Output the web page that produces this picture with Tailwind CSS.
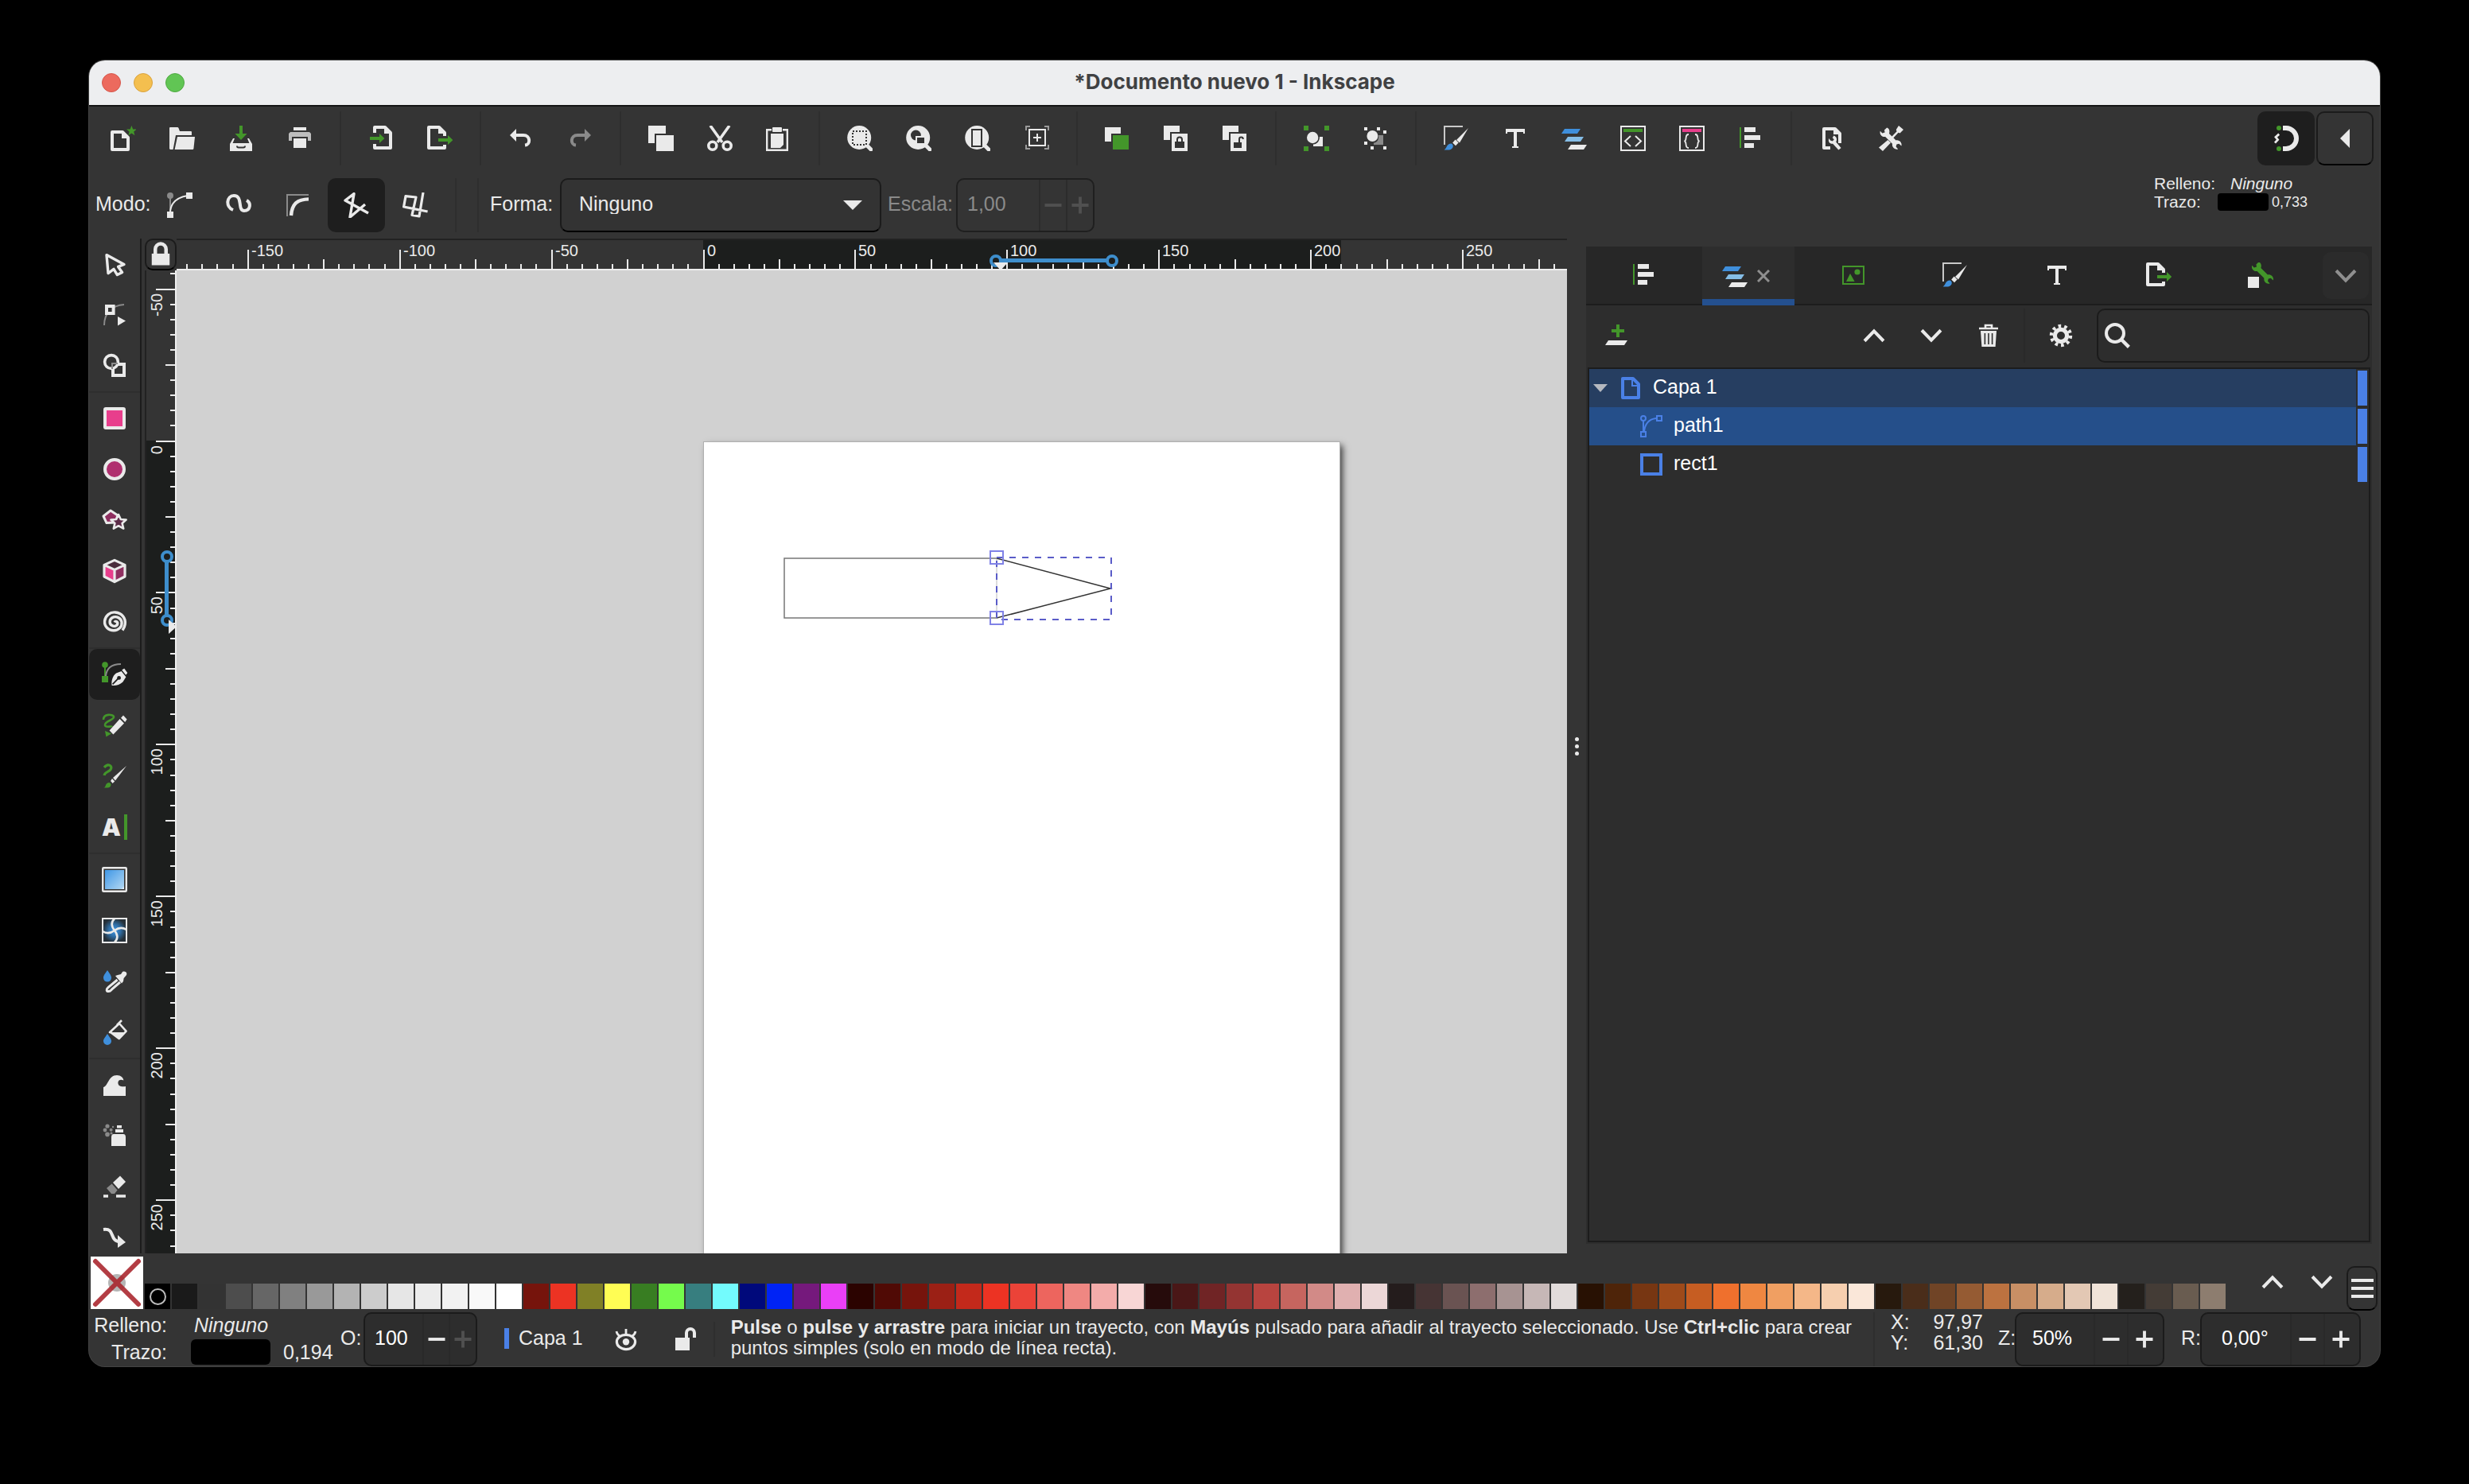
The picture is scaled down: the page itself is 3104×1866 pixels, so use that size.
<!DOCTYPE html>
<html lang="es">
<head>
  <meta charset="UTF-8" />
  <meta name="viewport" content="width=device-width, initial-scale=1.0" />
  <title>*Documento nuevo 1 - Inkscape</title>
  <script src="https://cdn.jsdelivr.net/npm/@tailwindcss/browser@4"></script>
</head>
<body class="bg-black">
  <!-- Icon sprite, 16x16 grid -->
  <svg class="absolute size-0" xmlns="http://www.w3.org/2000/svg">
    <defs>
      <linearGradient id="g-lin" x1="0" y1="0" x2="1" y2="1"><stop offset="0" stop-color="#3f97e6"/><stop offset=".9" stop-color="#a8d2f2"/><stop offset="1" stop-color="#ffffff"/></linearGradient>
      <radialGradient id="g-rad"><stop offset="0" stop-color="#3f97e6"/><stop offset=".5" stop-color="#2f6ea6"/><stop offset="1" stop-color="#263038"/></radialGradient>
      <path id="p-wrench" d="M5.600 1.200 4 2.800 4.300 4.300 2.700 4.800 1.400 3.400C.8 5.400 2.400 7.400 4.600 7L9 11.400c-.4 2.200 1.600 3.900 3.600 3.300l-1.300-1.400.4-1.500 1.500-.4 1.500 1.400c.6-2-1.200-4-3.400-3.600L7 5C7.600 3 6.900 1.600 5.600 1.200z"/>
    </defs>
    <symbol id="i-new" viewBox="0 0 16 16"><path d="M1 4h6.500L11 7.500V15H1z" fill="none" stroke="#eaeaea" stroke-width="2" stroke-linejoin="round"/><path d="M7 4v4h4z" fill="#eaeaea"/><path d="M13.200 0l.9 2.200 2.300.1-1.800 1.500.6 2.300-2-1.300-2 1.300.6-2.300L10 2.300l2.300-.1z" fill="#43962a"/></symbol>
    <symbol id="i-open" viewBox="0 0 16 16"><path d="M0 14.500V1.500Q0 1 .5 1H5q.6 0 .8.600L6.500 3.500H13.500q.5 0 .5.500v2H4L2.300 15H.5z" fill="#eaeaea"/><path d="M5 7h11l-.8 7.500q-.1.500-.6.500H3.300z" fill="#eaeaea"/></symbol>
    <symbol id="i-save" viewBox="0 0 16 16"><path d="M7 0h2v5h2.800L8 9 4.200 5H7z" fill="#43962a"/><path d="M3 8 1 11.500V16h14v-4.500L13 8h-1l1.200 3H2.800L4 8z" fill="#eaeaea"/><path d="M5.500 12.800q0 1 1 1h3q1 0 1-1" fill="none" stroke="#343434"/></symbol>
    <symbol id="i-print" viewBox="0 0 16 16"><rect x="4" y="1" width="8" height="2" fill="#eaeaea"/><path d="M2 4h12l1 1v4.500h-2V7H3v2.500H1V5z" fill="#bdbdbd"/><path d="M3 5h10v2H3z" fill="#bdbdbd"/><rect x="4" y="8" width="8" height="6" fill="#eaeaea"/></symbol>
    <symbol id="i-import" viewBox="0 0 16 16"><path d="M4 4.500V1h6.500L14 4.500V14H4v-2.500" fill="none" stroke="#eaeaea" stroke-width="2" stroke-linejoin="round"/><path d="M10 1v4h4z" fill="#eaeaea"/><path d="M1 7h6V5l3.200 3L7 11V9H1z" fill="#43962a"/></symbol>
    <symbol id="i-export" viewBox="0 0 16 16"><path d="M11 6.500V4.500L7.500 1H1v13h10v-2" fill="none" stroke="#eaeaea" stroke-width="2" stroke-linejoin="round"/><path d="M7 1v4h4.500z" fill="#eaeaea"/><path d="M7 8h6V6l3.200 3L13 12v-2H7z" fill="#43962a"/></symbol>
    <symbol id="i-undo" viewBox="0 0 16 16"><path d="M4 6h5.500c4.600 0 4.600 6 1 6.300" fill="none" stroke="#eaeaea" stroke-width="2"/><path d="M5 2v8L1 6z" fill="#eaeaea"/></symbol>
    <symbol id="i-redo" viewBox="0 0 16 16"><path d="M12 6H6.500c-4.600 0-4.600 6-1 6.300" fill="none" stroke="#8a8a8a" stroke-width="2"/><path d="M11 2v8l4-4z" fill="#8a8a8a"/></symbol>
    <symbol id="i-copy" viewBox="0 0 16 16"><path d="M0 0h11v5H4v6H0z" fill="#eaeaea"/><path d="M5 6h11v10H5z" fill="#eaeaea"/></symbol>
    <symbol id="i-cut" viewBox="0 0 16 16"><path d="M2 0l7.500 10.500M14 0 6.500 10.500" stroke="#eaeaea" stroke-width="1.800"/><circle cx="3.400" cy="12.600" r="2.500" fill="none" stroke="#eaeaea" stroke-width="1.800"/><circle cx="12.600" cy="12.600" r="2.500" fill="none" stroke="#eaeaea" stroke-width="1.800"/></symbol>
    <symbol id="i-paste" viewBox="0 0 16 16"><path d="M3.500 2.600H.6v12.800h12.800V2.600h-2.900" fill="none" stroke="#eaeaea" stroke-width="1.200"/><rect x="4" y="1" width="6" height="3" rx=".5" fill="#eaeaea"/><path d="M3 5h8v7l-2 2H3z" fill="#eaeaea"/></symbol>
    <symbol id="i-zoomsel" viewBox="0 0 16 16"><circle cx="7.600" cy="7.500" r="7.500" fill="#eaeaea"/><path d="M12 12l3 3" stroke="#eaeaea" stroke-width="2.400" stroke-linecap="round"/><rect x="3.500" y="3.500" width="8.500" height="8.500" fill="none" stroke="#343434" stroke-dasharray="1 1"/></symbol>
    <symbol id="i-zoomdraw" viewBox="0 0 16 16"><circle cx="7.600" cy="7.500" r="7.500" fill="#eaeaea"/><path d="M12 12l3 3" stroke="#eaeaea" stroke-width="2.400" stroke-linecap="round"/><circle cx="6.200" cy="6" r="3.200" fill="#343434"/><path d="M6.500 7h5.500v4.500H6.500z" fill="#343434" stroke="#eaeaea" stroke-width="1"/></symbol>
    <symbol id="i-zoompage" viewBox="0 0 16 16"><circle cx="7.600" cy="7.500" r="7.500" fill="#eaeaea"/><path d="M12 12l3 3" stroke="#eaeaea" stroke-width="2.400" stroke-linecap="round"/><rect x="4.500" y="2.500" width="6" height="10.500" fill="none" stroke="#343434"/></symbol>
    <symbol id="i-zoomcenter" viewBox="0 0 16 16"><path d="M1.500 3V.5H4M13 .5h2.500V3M15.500 12v2.500H13M4 14.500H1.500V12" fill="none" stroke="#9a9a9a"/><path d="M3.500 2.500h10v10h-10zM8.500 5v5M6 7.500h5" fill="none" stroke="#eaeaea"/></symbol>
    <symbol id="i-dup" viewBox="0 0 16 16"><path d="M0 1h10v4H4v5H0z" fill="#eaeaea"/><path d="M5 6h10v9H5z" fill="#43962a"/></symbol>
    <symbol id="i-clone" viewBox="0 0 16 16"><path d="M0 0h10v4H4v5H0z" fill="#eaeaea"/><path d="M5 5h10v11H5z" fill="#eaeaea"/><path d="M7 10h6v4H7z" fill="#343434"/><path d="M8.500 10V8.800a1.500 1.500 0 013 0V10" fill="none" stroke="#343434"/></symbol>
    <symbol id="i-unlink" viewBox="0 0 16 16"><path d="M0 0h10v4H4v5H0z" fill="#eaeaea"/><path d="M5 5h10v11H5z" fill="#eaeaea"/><path d="M7 10.500h5V14H7z" fill="#343434"/><path d="M10.500 11V8.500a1.200 1.200 0 012.400 0" fill="none" stroke="#343434"/></symbol>
    <symbol id="i-group" viewBox="0 0 16 16"><path d="M0 0h3v3H0zM13 0h3v3h-3zM0 13h3v3H0zM13 13h3v3h-3z" fill="#43962a"/><circle cx="5.600" cy="7.500" r="3.600" fill="#eaeaea"/><path d="M10 7h2v6H6v-1.300c2.500 0 4-2 4-4.700z" fill="#eaeaea"/></symbol>
    <symbol id="i-ungroup" viewBox="0 0 16 16"><path d="M10 6h3v6H7v-1.200c2 0 3.500-2.300 3-4.800z" fill="#8a8a8a"/><circle cx="6.200" cy="6.500" r="3.500" fill="#eaeaea"/><path d="M1 1h2v2H1zM9 1h2v2H9zM13 3h2v2h-2zM1 10h2v2H1zM5 13h2v2H5zM13 13h2v2h-2z" fill="#eaeaea"/></symbol>
    <symbol id="i-fill" viewBox="0 0 16 16"><path d="M.5 12V.5H12" fill="none" stroke="#c9c9c9"/><path d="M15.500 1.500 10 10.800 8 9z" fill="#eaeaea"/><path d="M7.300 8.800l2 2-1.800 1.800L5.600 10.700z" fill="#eaeaea"/><path d="M4.800 11.300c1.800.6 1.400 3.700-1.300 3.900-1 .1-2 0-3.200.1C2 14.300 1.800 11.400 4.800 11.300z" fill="#3f8fdc"/></symbol>
    <symbol id="i-text" viewBox="0 0 16 16"><rect x="2" y="2" width="12" height="2" fill="#eaeaea"/><rect x="2" y="2" width="1" height="3" fill="#eaeaea"/><rect x="13" y="2" width="1" height="3" fill="#eaeaea"/><rect x="7" y="2" width="2" height="12" fill="#eaeaea"/><rect x="6" y="13" width="4" height="1" fill="#eaeaea"/></symbol>
    <symbol id="i-layers" viewBox="0 0 16 16"><path d="M2 2h10l-2 3H0z" fill="#3f8fdc"/><path d="M4 7h10l-2 3H2z" fill="#85bde6"/><path d="M6 12h10l-2 3H4z" fill="#eaeaea"/></symbol>
    <symbol id="i-xml" viewBox="0 0 16 16"><rect x=".5" y=".5" width="15" height="15" fill="none" stroke="#eaeaea"/><rect x="2" y="2" width="12" height="2" fill="#43962a"/><path d="M6.500 6.500 3 9.800l3.500 3.200M9.500 6.500 13 9.800l-3.500 3.200" fill="none" stroke="#eaeaea"/></symbol>
    <symbol id="i-css" viewBox="0 0 16 16"><rect x=".5" y=".5" width="15" height="15" fill="none" stroke="#eaeaea"/><rect x="2" y="2" width="12" height="2" fill="#e83e8c"/><path d="M6 5.500c-3 0-.6 4-2.800 4.200C5.400 10 3 14 6 14M10 5.500c3 0 .6 4 2.800 4.200C10.600 10 13 14 10 14" fill="none" stroke="#eaeaea" stroke-width=".9"/></symbol>
    <symbol id="i-align" viewBox="0 0 16 16"><path d="M1 1h1v13H1z" fill="#43962a"/><path d="M4 1h7v3H4zM4 6h10v3H4zM4 11h6v3H4z" fill="#eaeaea"/></symbol>
    <symbol id="i-docprops" viewBox="0 0 16 16"><path d="M7 14H3V2h7l3 3v6" fill="none" stroke="#eaeaea" stroke-width="2" stroke-linejoin="round"/><path d="M9 1.500v4h4z" fill="#eaeaea"/><path d="M9.200 6.200 8.400 7.600 9.400 8.800 8.400 9.800 7 9.300 6.200 8C5.400 10 6.600 11.600 8.600 11.400L12.200 15.200 13.800 14 10.600 10.200C11.600 8.600 10.800 6.600 9.200 6.200z" fill="#eaeaea"/></symbol>
    <symbol id="i-prefs" viewBox="0 0 16 16"><path d="M13 0 16 2.500 13.800 4.800 12.800 4.400 8.700 8.700 7.800 7.800 11.800 3.600 11.400 2.500zM6.200 9 8 10.800 3 16 .5 13.700z" fill="#eaeaea"/><use href="#p-wrench" fill="#eaeaea"/></symbol>
    <symbol id="i-snap" viewBox="0 0 16 16"><circle cx="3.500" cy="1.500" r="1.500" fill="#43962a"/><circle cx="3.500" cy="14.500" r="1.500" fill="#43962a"/><path d="M6 1.500h2a6.500 6.500 0 010 13H6" fill="none" stroke="#eaeaea" stroke-width="3"/><path d="M3.600 5.300 1.500 7.200 2.800 8.800 1 10.800" fill="none" stroke="#eaeaea" stroke-width="1.400"/></symbol>
    <symbol id="i-m-bezier" viewBox="0 0 16 16"><circle cx="2" cy="2" r="2" fill="#8a8a8a"/><path d="M2 3v9" stroke="#8a8a8a"/><path d="M2 13C2 6 7 3 13 2" fill="none" stroke="#eaeaea"/><path d="M0 12h4v4H0zM12 0h4v4h-4z" fill="#eaeaea"/></symbol>
    <symbol id="i-m-spiro" viewBox="0 0 16 16"><path d="M4.500 11C-.5 9 .5 2 5 2c6 0 2 9.500 6.500 9.500 4 0 4.500-5 1.500-6.500" fill="none" stroke="#eaeaea" stroke-width="2"/></symbol>
    <symbol id="i-m-bspline" viewBox="0 0 16 16"><path d="M1.500 15V1.500H15" fill="none" stroke="#8a8a8a"/><path d="M4 14.500C4.500 7 8 4.300 15 4.200" fill="none" stroke="#eaeaea" stroke-width="2.200"/></symbol>
    <symbol id="i-m-zigzag" viewBox="0 0 16 16"><path d="M15.500 13 1 5 6.500.8 4 15.500 13.500 7.500" fill="none" stroke="#eaeaea" stroke-width="1.700" stroke-linejoin="round"/></symbol>
    <symbol id="i-m-paraxial" viewBox="0 0 16 16"><path d="M13 0 10.500 15 6 14.200 8.500 3 2 2.300.8 9l15 3" fill="none" stroke="#eaeaea" stroke-width="1.600" stroke-linejoin="round"/></symbol>
    <symbol id="i-select" viewBox="0 0 16 16"><path d="M3 2.300 14 8.200 10.300 9.700 12.800 13.200 9.700 14.800 7.500 11.200 4 13.800z" fill="none" stroke="#eaeaea" stroke-width="1.700" stroke-linejoin="round"/></symbol>
    <symbol id="i-node" viewBox="0 0 16 16"><path d="M1.500 14.500C1.500 7 6 2 14 1.500" fill="none" stroke="#8a8a8a"/><path d="M3 2.500h4.300V7H3z" fill="#343434" stroke="#eaeaea" stroke-width="2"/><path d="M10 9l5 2.700-5 3z" fill="#eaeaea"/></symbol>
    <symbol id="i-builder" viewBox="0 0 16 16"><circle cx="6" cy="5.500" r="4.200" fill="none" stroke="#eaeaea" stroke-width="1.800"/><path d="M10 7h4v7H7V10" fill="none" stroke="#eaeaea" stroke-width="2"/><path d="M6.500 10V6.500H10" fill="none" stroke="#8a8a8a"/></symbol>
    <symbol id="i-rect" viewBox="0 0 16 16"><rect x="2" y="2" width="12" height="12" rx=".5" fill="#e83e8c" stroke="#eaeaea" stroke-width="2"/></symbol>
    <symbol id="i-ellipse" viewBox="0 0 16 16"><circle cx="8" cy="8" r="6" fill="#b0306f" stroke="#eaeaea" stroke-width="2"/></symbol>
    <symbol id="i-star" viewBox="0 0 16 16"><path d="M5.500 2 10 5 8.500 9.500 3 9.800 1 5.500z" fill="#8f2f60" stroke="#eaeaea" stroke-width="1.500" stroke-linejoin="round"/><path d="M10.500 4.500l1.400 3 3.400.3-2.500 2.200.8 3.300-3.100-1.700-3.100 1.700.8-3.300-2.500-2.200 3.400-.3z" fill="#5c2c48" stroke="#eaeaea" stroke-width="1.300" stroke-linejoin="round"/></symbol>
    <symbol id="i-cube" viewBox="0 0 16 16"><path d="M8 1l6.500 3L8 7 1.500 4z" fill="#4a2c3c"/><path d="M1.500 4 8 7v8L1.500 11.500z" fill="#e83e8c"/><path d="M14.500 4 8 7v8l6.500-3.500z" fill="#8f2f60"/><path d="M8 1.200l6.500 3v7.300L8 14.800l-6.500-3.300V4.200zM1.500 4.200 8 7.200l6.500-3M8 7.200v7.600" fill="none" stroke="#eaeaea" stroke-width="1.600" stroke-linejoin="round"/></symbol>
    <symbol id="i-spiral" viewBox="0 0 16 16"><path d="M8 8.200c.5-1 2-.3 1.900.9-.1 1.400-2.100 2-3.500 1.200C4.500 9.200 4.700 6.500 6.500 5.400c2.300-1.400 5.500-.1 6 2.600.5 3-2 5.400-5 5.400-3.500 0-6-2.700-5.700-6C2.200 4 5.200 1.600 8.600 2c3.900.4 6.600 3.600 6 7.500-.2 1.500-.8 2.700-1.600 3.800" fill="none" stroke="#eaeaea" stroke-width="1.700"/></symbol>
    <symbol id="i-pen" viewBox="0 0 16 16"><path d="M2 2v9" stroke="#43962a"/><circle cx="2" cy="2" r="1.900" fill="#43962a"/><path d="M0 9h4v4H0z" fill="#43962a"/><path d="M2.500 9C3 4 6 1.500 12 1.500" fill="none" stroke="#8a8a8a"/><path d="M6.300 15C5.800 11.500 7 8.800 9 7.200L12.300 6 15.200 9.600 13.200 12.800C11.500 14.400 9.500 15 7.500 15z" fill="#eaeaea"/><path d="M12.600 5.200l1.500-.9 2 2.700-1 1.400z" fill="#eaeaea"/><path d="M6.800 14.200l3.500-3.600" stroke="#1f1f1f" stroke-width=".9"/><circle cx="10.800" cy="10.200" r="1.200" fill="#1f1f1f"/></symbol>
    <symbol id="i-pencil" viewBox="0 0 16 16"><path d="M1 4.500C1 .5 7 1 7.500 2.500 8 5 1.500 5 2 8c.5 2 4 0 4.500 1" fill="none" stroke="#43962a" stroke-width="1.300"/><path d="M2 11.500l4 1.800-3.300 2z" fill="#43962a"/><path d="M4.800 11.300 11.300 4l2.700 2.800-6.800 6.900zM12 3.400l1.500-1.700 2.300 2.600L14.600 6z" fill="#eaeaea"/></symbol>
    <symbol id="i-calli" viewBox="0 0 16 16"><path d="M1.500 2.500C4-.5 7 1.500 5.500 3.800 4.500 5.500 2 5 1.500 7.500" fill="none" stroke="#43962a" stroke-width="1.600"/><path d="M1 15.200c2 0 .8-3 3.500-3.200C6.500 12.300 6 15.300 3.500 15.300z" fill="#43962a"/><path d="M15.500 1.500 8.500 10.800 7 9z" fill="#eaeaea"/><path d="M6.500 9.500l1.600 1.700-1.300 1.300L5.500 11z" fill="#eaeaea"/></symbol>
    <symbol id="i-gradient" viewBox="0 0 16 16"><rect x=".6" y=".6" width="14.800" height="14.800" rx=".5" fill="none" stroke="#eaeaea" stroke-width="1.200"/><rect x="2" y="2" width="12" height="12" fill="url(#g-lin)"/></symbol>
    <symbol id="i-mesh" viewBox="0 0 16 16"><rect x=".5" y=".5" width="15" height="15" fill="url(#g-rad)" stroke="#eaeaea"/><path d="M8 .5C5.500 3 6 5.500 8 8s2.500 5 0 7.500M.5 8.500C3.500 10.500 6 9.500 8 8s4.500-2.500 7.500-.5" fill="none" stroke="#eaeaea" stroke-width="1.300"/></symbol>
    <symbol id="i-dropper" viewBox="0 0 16 16"><path d="M3.500 1C5 3.200 6 4.300 6 5.800A2.500 2.500 0 011 5.800C1 4.300 2 3.200 3.500 1z" fill="#3f8fdc"/><path d="M9.800 7 4 11.800c-1.500 1.300-1 2.600.3 2.500 1.200 0 1.500-.8 2.200-1.500L11.500 8.500" fill="none" stroke="#eaeaea" stroke-width="1.500"/><path d="M8.500 4.500 10 4l2-.5L13 2c1.500-.8 3.500.5 2.300 2.300L13.800 6l-.3 2-1 1.200z" fill="#eaeaea"/></symbol>
    <symbol id="i-bucket" viewBox="0 0 16 16"><path d="M3.500 9C5 11.200 6 12.300 6 13.500a2.500 2.500 0 01-5 0C1 12.300 2 11.200 3.500 9z" fill="#3f8fdc"/><path d="M5 8 11 2.500l4.300 4.800L10.800 12 6 8.300z" fill="none" stroke="#eaeaea" stroke-width="1.300" stroke-linejoin="round"/><path d="M5 8h9.800l-4 4z" fill="#eaeaea"/><path d="M12.500.5 9.500 3.500" stroke="#eaeaea" stroke-width="1.300"/></symbol>
    <symbol id="i-tweak" viewBox="0 0 16 16"><path d="M1 15V9.500C4 9 4 2 9.500 2c2.500 0 4 1.500 4.200 3.300C12 4.300 10 5 10.200 7c.2 2 2.300 2.500 4.800 2V15z" fill="#eaeaea"/></symbol>
    <symbol id="i-spray" viewBox="0 0 16 16"><g fill="#8a8a8a"><circle cx="3.500" cy="2" r="1.300"/><circle cx="2" cy="4.500" r="1.200"/><circle cx="3.500" cy="7.200" r="1.400"/><circle cx="5.800" cy="4.400" r="1"/><circle cx="6" cy="6.500" r=".8"/><circle cx="7" cy="2.500" r=".6"/></g><path d="M9.500 1.500h3v1.700h-3zM8.500 4h5v2h-5zM6 9q0-2 1.500-2h6Q15 7 15 9v5.500H6z" fill="#eaeaea"/></symbol>
    <symbol id="i-eraser" viewBox="0 0 16 16"><path d="M11.500 1.200 15 5l-4.500 4.500L7 5.500z" fill="#eaeaea"/><path d="M6.300 6.200l3.500 4-1.800 2.300H6L3 9z" fill="#8a8a8a"/><path d="M1 14h3M9 14h6" stroke="#eaeaea" stroke-width="1.800"/></symbol>
    <symbol id="i-connector" viewBox="0 0 16 16"><path d="M1 3c8-1 3 7.500 11 7.800" fill="none" stroke="#eaeaea" stroke-width="2"/><path d="M10 6.500 15 11l-5 3.500z" fill="#eaeaea"/></symbol>
    <symbol id="i-image" viewBox="0 0 16 16"><path d="M1.500 2.500h13v11h-13z" fill="none" stroke="#43962a"/><path d="M3.500 12 6 7l2.800 5z" fill="#43962a"/><circle cx="10.500" cy="6" r="1.800" fill="#43962a"/></symbol>
    <symbol id="i-objprops" viewBox="0 0 16 16"><path d="M0 9h7v7H0z" fill="#eaeaea"/><use href="#p-wrench" x="1.200" y="-1.500" fill="#43962a"/></symbol>
    <symbol id="i-up" viewBox="0 0 16 16"><path d="M2.700 11 8 5.500 13.300 11" fill="none" stroke="#eaeaea" stroke-width="1.800"/></symbol>
    <symbol id="i-down" viewBox="0 0 16 16"><path d="M2.700 5 8 10.500 13.300 5" fill="none" stroke="currentColor" stroke-width="1.800"/></symbol>
    <symbol id="i-trash" viewBox="0 0 16 16"><path d="M2 3.500h12M6 3V1.500h4V3" fill="none" stroke="#eaeaea" stroke-width="1.300"/><path d="M3 5h10l-.7 10H3.700z" fill="#eaeaea"/><path d="M5.700 6.500v7M8 6.500v7M10.300 6.500v7" stroke="#2d2d2d" stroke-width=".8"/></symbol>
    <symbol id="i-gear" viewBox="0 0 16 16"><circle cx="8" cy="8" r="3.800" fill="none" stroke="#eaeaea" stroke-width="2.600"/><circle cx="8" cy="8" r="6" fill="none" stroke="#eaeaea" stroke-width="2.200" stroke-dasharray="1.800 1.970"/></symbol>
    <symbol id="i-search" viewBox="0 0 16 16"><circle cx="6.500" cy="6.500" r="5.500" fill="none" stroke="#eaeaea" stroke-width="2"/><path d="M10.500 10.500l4.700 4.700" stroke="#eaeaea" stroke-width="2.200"/></symbol>
    <symbol id="i-addlayer" viewBox="0 0 16 16"><path d="M8 1h2v3h3v2h-3v3H8V6H5V4h3z" fill="#43962a"/><path d="M3 11h12l-2 3H1z" fill="#eaeaea"/></symbol>
    <symbol id="i-layer" viewBox="0 0 16 16"><path d="M3 2h6.500L13 5.500V14H3z" fill="none" stroke="#4a80e6" stroke-width="2" stroke-linejoin="round"/><path d="M9 2v4.500h4" fill="none" stroke="#4a80e6"/></symbol>
    <symbol id="i-path" viewBox="0 0 16 16"><path d="M3 4.500V12M3.500 11.500C4 6 7 3.500 11 3" fill="none" stroke="#4a80e6"/><circle cx="3" cy="3" r="1.500" fill="none" stroke="#4a80e6"/><path d="M1.500 11.500h3v3h-3zM11.500 1.500h3v3h-3z" fill="none" stroke="#4a80e6"/></symbol>
    <symbol id="i-shape" viewBox="0 0 16 16"><path d="M2 2h12v12H2z" fill="none" stroke="#4a80e6" stroke-width="2"/></symbol>
    <symbol id="i-lock" viewBox="0 0 16 16"><path d="M3 7.500h10V14H3z" fill="#eaeaea"/><path d="M5 8V5a3 3 0 016 0v3" fill="none" stroke="#eaeaea" stroke-width="2"/></symbol>
    <symbol id="i-unlock" viewBox="0 0 16 16"><path d="M2 7h9v8H2z" fill="#eaeaea"/><path d="M9 8V4a2.500 2.500 0 015 0v3" fill="none" stroke="#eaeaea" stroke-width="2"/></symbol>
    <symbol id="i-eye" viewBox="0 0 16 16"><path d="M8 5.200c3.200 0 5.800 2 5.800 4.400S11.200 14.300 8 14.300 2.200 12.200 2.200 9.600 4.800 5.200 8 5.200z" fill="none" stroke="#eaeaea" stroke-width="1.600"/><circle cx="8" cy="9.600" r="2.100" fill="#eaeaea"/><path d="M8 1.500V5M2 3c.3 1.500 1.300 2.600 2.500 3.200M14 3c-.3 1.500-1.300 2.600-2.500 3.200" fill="none" stroke="#eaeaea" stroke-width="1.400"/></symbol>
    <symbol id="i-minus" viewBox="0 0 16 16"><path d="M2 8h12" stroke="currentColor" stroke-width="2.200"/></symbol>
    <symbol id="i-plus" viewBox="0 0 16 16"><path d="M2 8h12M8 2v12" stroke="currentColor" stroke-width="2.200"/></symbol>
  </svg>

  <div class="flex h-screen flex-col bg-black px-[112px] pt-[76px] pb-[148px] font-['Liberation_Sans',Arial,sans-serif] text-[25px] leading-[26px] text-[#eaeaea]">
    <div class="flex min-h-0 flex-1 flex-col overflow-hidden rounded-[20px] bg-[#343434] ring-1 ring-[#444]">

      <!-- Title bar -->
      <header class="relative flex h-[58px] shrink-0 items-center justify-center border-b-2 border-[#151515] bg-[#edeef0]">
        <div class="absolute left-4 flex gap-4">
          <button aria-label="Cerrar" class="size-6 rounded-full border border-[#d5574c] bg-[#ec6a5e]"></button>
          <button aria-label="Minimizar" class="size-6 rounded-full border border-[#d9a23e] bg-[#f4bf4f]"></button>
          <button aria-label="Maximizar" class="size-6 rounded-full border border-[#4fa942] bg-[#61c554]"></button>
        </div>
        <h1 class="pb-[2px] font-[Inter,sans-serif] text-[26px] font-bold text-[#404143]">*Documento nuevo 1 - Inkscape</h1>
      </header>

      <!-- Command bar -->
      <div class="flex h-[82px] shrink-0 items-start pt-[6px] pr-2 pl-[6px]">
        <div id="commands" class="flex"></div>
        <div class="ml-auto flex gap-[2px]">
          <button aria-label="Ajuste" class="flex h-[68px] w-[72px] items-center justify-center rounded-[10px] bg-[#1e1e1e]"><svg class="size-8"><use href="#i-snap"/></svg></button>
          <button aria-label="Opciones de ajuste" class="flex h-[68px] w-[72px] items-center justify-center rounded-[10px] border-2 border-[#1b1b1b] border-b-black"><svg class="h-6 w-3" viewBox="0 0 12 24"><path d="M12 0v24L0 12z" fill="#eaeaea"/></svg></button>
        </div>
      </div>

      <!-- Tool controls -->
      <div class="flex h-[84px] shrink-0 items-center pl-2">
        <span class="w-[70px] pb-1">Modo:</span>
        <div id="modes" class="flex gap-[2px]"></div>
        <span class="ml-[14px] h-[68px] w-[2px] bg-[#2e2e2e]"></span>
        <span class="ml-[26px] h-[68px] w-[2px] bg-[#2e2e2e]"></span>
        <label for="shape" class="ml-[14px] w-[88px] pb-1">Forma:</label>
        <div class="relative">
          <select id="shape" class="h-[68px] w-[404px] appearance-none rounded-[10px] border-2 border-[#1b1b1b] border-b-black bg-[#333] pb-1 pl-[22px]">
            <option>Ninguno</option>
            <option>Triángulo entrante</option>
            <option>Elipse</option>
          </select>
          <svg class="pointer-events-none absolute top-[28px] right-6 h-3 w-6" viewBox="0 0 24 12"><path d="M0 0h24L12 12z" fill="#eaeaea"/></svg>
        </div>
        <label for="scale" class="ml-2 w-[86px] pb-1 text-[#8a8a8a]">Escala:</label>
        <div class="flex h-[68px] w-[174px] rounded-[10px] border-2 border-[#1f1f1f] text-[#505050]">
          <input id="scale" value="1,00" disabled class="w-[102px] pb-1 pl-3 text-[#8a8a8a]" />
          <button disabled aria-label="Reducir escala" class="flex w-[34px] items-center justify-center border-l-2 border-[#2c2c2c]"><svg class="size-7"><use href="#i-minus"/></svg></button>
          <button disabled aria-label="Aumentar escala" class="flex w-[34px] items-center justify-center border-l-2 border-[#2c2c2c]"><svg class="size-7"><use href="#i-plus"/></svg></button>
        </div>
        <div class="ml-auto grid w-[284px] grid-cols-[80px_1fr] gap-y-px pb-8 text-[21px] leading-[22px]">
          <span>Relleno:</span><span class="pl-4 italic">Ninguno</span>
          <span>Trazo:</span>
          <span class="flex items-center gap-1"><i class="h-[22px] w-16 rounded bg-black"></i><span class="text-[18px]">0,733</span></span>
        </div>
      </div>

      <main class="flex min-h-0 flex-1">
        <!-- Toolbox -->
        <nav id="toolbox" aria-label="Herramientas" class="flex w-[66px] shrink-0 flex-col overflow-hidden border-r-2 border-[#1c1c1c]"></nav>

        <!-- Rulers and canvas -->
        <section class="ml-1 grid min-w-0 flex-1 grid-cols-[40px_1fr] grid-rows-[40px_1fr]">
          <button aria-label="Bloquear guías" class="flex items-center justify-center rounded-[10px] border-2 border-[#1b1b1b] border-b-black"><svg class="size-9"><use href="#i-lock"/></svg></button>
          <svg id="rulerTop" class="h-10 w-full"></svg>
          <svg id="rulerLeft" class="h-full w-10"></svg>
          <div class="relative min-h-0 overflow-hidden bg-[#d1d1d1]">
            <div class="absolute top-[216px] left-[663px] h-[1134px] w-[799px] bg-white shadow-[4px_4px_8px_rgba(0,0,0,0.7)] outline outline-[#b0b0b0]"></div>
            <svg class="absolute inset-0 h-full w-full" fill="none">
              <path d="M1031 362H764v75h267" stroke="#777777" stroke-width="1.500"/>
              <path d="M1031 362v75" stroke="#bbbbbb"/>
              <path d="M1031 362l143 38-143 37" stroke="#333333" stroke-width="1.500"/>
              <path d="M1031 361h144v78h-144z" stroke="#5a5cc8" stroke-width="2" stroke-dasharray="8 8"/>
              <path d="M1023 353h16v16h-16zM1023 429h16v16h-16z" stroke="#8082e6" stroke-width="2"/>
            </svg>
          </div>
        </section>

        <div class="flex w-6 shrink-0 flex-col items-center justify-center gap-1">
          <i class="size-[5px] rounded-full bg-[#eaeaea]"></i><i class="size-[5px] rounded-full bg-[#eaeaea]"></i><i class="size-[5px] rounded-full bg-[#eaeaea]"></i>
        </div>

        <!-- Objects panel -->
        <aside class="mt-[10px] mr-[10px] mb-3 flex w-[988px] shrink-0 flex-col bg-[#2d2d2d]">
          <div class="flex h-[74px] border-b-2 border-[#1c1c1c] bg-[#272727]">
            <button aria-label="Alinear y distribuir" class="flex w-[146px] items-center justify-center"><svg class="size-8"><use href="#i-align"/></svg></button>
            <button aria-label="Capas y objetos" class="flex h-[74px] w-[116px] items-center justify-center gap-3 border-b-8 border-[#24508f] bg-[#2d2d2d] pt-2 pr-[6px]"><svg class="size-8"><use href="#i-layers"/></svg><svg class="size-4 text-[#8f8f8f]" viewBox="0 0 16 16"><path d="M1 1l14 14M15 1 1 15" stroke="currentColor" stroke-width="3"/></svg></button>
            <div class="ml-[10px] flex flex-1">
              <button aria-label="Trazar mapa de bits" class="flex flex-1 items-center justify-center"><svg class="size-8"><use href="#i-image"/></svg></button>
              <button aria-label="Relleno y borde" class="flex flex-1 items-center justify-center"><svg class="size-8"><use href="#i-fill"/></svg></button>
              <button aria-label="Texto y tipografía" class="flex flex-1 items-center justify-center"><svg class="size-8"><use href="#i-text"/></svg></button>
              <button aria-label="Exportar" class="flex flex-1 items-center justify-center"><svg class="size-8"><use href="#i-export"/></svg></button>
              <button aria-label="Propiedades del objeto" class="flex flex-1 items-center justify-center"><svg class="size-8"><use href="#i-objprops"/></svg></button>
            </div>
            <button aria-label="Más diálogos" class="mt-[7px] mr-1 ml-[14px] flex h-[59px] w-[58px] items-center justify-center rounded-[10px] bg-[#2b2b2b] text-[#8f8f8f]"><svg class="size-9"><use href="#i-down"/></svg></button>
          </div>
          <div class="flex h-[78px] items-center pb-[2px]">
            <button aria-label="Añadir capa" class="flex w-[76px] items-center justify-center"><svg class="size-8"><use href="#i-addlayer"/></svg></button>
            <div class="ml-auto flex">
              <button aria-label="Subir" class="flex w-[72px] items-center justify-center"><svg class="size-9"><use href="#i-up"/></svg></button>
              <button aria-label="Bajar" class="flex w-[72px] items-center justify-center"><svg class="size-9"><use href="#i-down"/></svg></button>
              <button aria-label="Eliminar" class="flex w-[72px] items-center justify-center"><svg class="size-8"><use href="#i-trash"/></svg></button>
            </div>
            <span class="ml-2 h-[68px] w-[2px] bg-[#292929]"></span>
            <button aria-label="Ajustes" class="flex w-[90px] items-center justify-center"><svg class="size-8"><use href="#i-gear"/></svg></button>
            <label for="search" class="mr-[3px] flex h-[68px] w-[343px] items-center rounded-[10px] border-2 border-[#1b1b1b] pl-2"><svg class="size-8 shrink-0"><use href="#i-search"/></svg><input id="search" type="search" aria-label="Buscar" class="ml-2 w-full outline-none" /></label>
          </div>
          <ul class="mx-[2px] mb-[2px] flex-1 border-2 border-[#1c1c1c] text-white">
            <li class="flex h-12 items-center">
              <div class="flex h-full flex-1 items-center bg-[#263e61] pl-[5px]"><svg class="h-[10px] w-[18px]" viewBox="0 0 18 10"><path d="M0 0h18L9 10z" fill="#b5b9c0"/></svg><svg class="ml-[13px] size-8"><use href="#i-layer"/></svg><span class="ml-3 pb-1">Capa 1</span></div>
              <i class="mr-[2px] ml-[2px] h-11 w-3 bg-[#4a80e6]"></i>
            </li>
            <li class="flex h-12 items-center">
              <div class="flex h-full flex-1 items-center bg-[#254f8a] pl-[62px]"><svg class="size-8"><use href="#i-path"/></svg><span class="ml-3 pb-1">path1</span></div>
              <i class="mr-[2px] ml-[2px] h-11 w-3 bg-[#4a80e6]"></i>
            </li>
            <li class="flex h-12 items-center">
              <div class="flex h-full flex-1 items-center pl-[62px]"><svg class="size-8"><use href="#i-shape"/></svg><span class="ml-3 pb-1">rect1</span></div>
              <i class="mr-[2px] ml-[2px] h-11 w-3 bg-[#4a80e6]"></i>
            </li>
          </ul>
        </aside>
      </main>

      <!-- Palette -->
      <div class="flex h-[74px] shrink-0 items-start pt-1 pl-[2px]">
        <button aria-label="Ninguno" class="size-[66px] shrink-0 bg-white"><svg viewBox="0 0 66 66"><circle cx="33" cy="33" r="11" fill="#b5b5b5"/><path d="M6 6l54 54M60 6 6 60" stroke="#a8222a" stroke-opacity=".88" stroke-width="6" stroke-linecap="round"/></svg></button>
        <div id="palette" class="mt-[34px] ml-[2px] flex gap-[2px]"></div>
        <div class="ml-auto flex items-start text-[#eaeaea]">
          <button aria-label="Anterior" class="mt-[14px] flex w-[62px] justify-center"><svg class="size-9"><use href="#i-up"/></svg></button>
          <button aria-label="Siguiente" class="mt-[14px] flex w-[62px] justify-center"><svg class="size-9"><use href="#i-down"/></svg></button>
          <button aria-label="Menú de paletas" class="mt-3 mr-[3px] flex h-14 w-[39px] flex-col items-center justify-center gap-[6px] rounded-[10px] border-2 border-[#1b1b1b] border-b-black"><i class="h-1 w-7 bg-[#eaeaea]"></i><i class="h-1 w-7 bg-[#eaeaea]"></i><i class="h-1 w-7 bg-[#eaeaea]"></i></button>
        </div>
      </div>

      <!-- Status bar -->
      <footer class="flex h-[68px] shrink-0 items-center">
        <div class="grid w-[316px] grid-cols-[98px_1fr] gap-x-[30px] pb-[2px] text-right leading-[34px]">
          <span>Relleno:</span><span class="pl-1 text-left italic">Ninguno</span>
          <span>Trazo:</span><span class="flex items-center gap-4"><i class="h-8 w-[100px] rounded-md bg-black"></i>0,194</span>
        </div>
        <label for="opacity" class="w-[29px] pb-1">O:</label>
        <div class="flex h-[68px] w-[143px] rounded-[10px] border-2 border-[#1b1b1b] bg-[#2d2d2d]">
          <input id="opacity" value="100" class="w-[72px] pb-1 pl-3 text-white" />
          <button aria-label="Reducir opacidad" class="flex w-[33px] items-center justify-center border-l-2 border-[#292929]"><svg class="size-7"><use href="#i-minus"/></svg></button>
          <button aria-label="Aumentar opacidad" class="flex w-[33px] items-center justify-center border-l-2 border-[#292929] text-[#505050]"><svg class="size-7"><use href="#i-plus"/></svg></button>
        </div>
        <button class="ml-[34px] flex items-center gap-3 pb-[2px]"><i class="h-[26px] w-[6px] bg-[#4a80e6]"></i><span class="pb-[2px]">Capa 1</span></button>
        <button aria-label="Visibilidad de la capa" class="ml-9 w-[60px] pl-[2px]"><svg class="size-8"><use href="#i-eye"/></svg></button>
        <button aria-label="Bloquear capa" class="w-[66px] pl-4"><svg class="size-8"><use href="#i-unlock"/></svg></button>
        <span class="mx-[2px] h-11 w-[2px] bg-[#2e2e2e]"></span>
        <p class="min-w-0 flex-1 pb-1 pl-[18px] text-[24px]"><b>Pulse</b> o <b>pulse y arrastre</b> para iniciar un trayecto, con <b>Mayús</b> pulsado para añadir al trayecto seleccionado. Use <b>Ctrl+clic</b> para crear puntos simples (solo en modo de línea recta).</p>
        <span class="h-[68px] w-[2px] bg-[#2e2e2e]"></span>
        <div class="ml-5 grid w-[135px] grid-cols-[50px_66px] pb-[18px] text-right"><span class="text-left">X:</span><span>97,97</span><span class="text-left">Y:</span><span>61,30</span></div>
        <label for="zoom" class="w-[21px] pb-1">Z:</label>
        <div class="flex h-[68px] w-[188px] rounded-[10px] border-2 border-[#1b1b1b] bg-[#2d2d2d]">
          <input id="zoom" value="50%" class="w-[97px] pb-1 pl-5 text-white" />
          <button aria-label="Alejar" class="flex w-[42px] items-center justify-center border-l-2 border-[#292929]"><svg class="size-7"><use href="#i-minus"/></svg></button>
          <button aria-label="Acercar" class="flex w-[42px] items-center justify-center border-l-2 border-[#292929]"><svg class="size-7"><use href="#i-plus"/></svg></button>
        </div>
        <label for="rotation" class="ml-[21px] w-6 pb-1">R:</label>
        <div class="mr-6 flex h-[68px] w-[202px] rounded-[10px] border-2 border-[#1b1b1b] bg-[#2d2d2d]">
          <input id="rotation" value="0,00°" class="w-[111px] pb-1 pl-[25px] text-white" />
          <button aria-label="Girar a la izquierda" class="flex w-[42px] items-center justify-center border-l-2 border-[#292929]"><svg class="size-7"><use href="#i-minus"/></svg></button>
          <button aria-label="Girar a la derecha" class="flex w-[42px] items-center justify-center border-l-2 border-[#292929]"><svg class="size-7"><use href="#i-plus"/></svg></button>
        </div>
      </footer>
    </div>
  </div>

  <script>
    // Command bar groups, divided by separators
    const commands = [
      [["new", "Nuevo"], ["open", "Abrir"], ["save", "Guardar"], ["print", "Imprimir"]],
      [["import", "Importar"], ["export", "Exportar"]],
      [["undo", "Deshacer"], ["redo", "Rehacer"]],
      [["copy", "Copiar"], ["cut", "Cortar"], ["paste", "Pegar"]],
      [["zoomsel", "Zoom a la selección"], ["zoomdraw", "Zoom al dibujo"], ["zoompage", "Zoom a la página"], ["zoomcenter", "Centrar página"]],
      [["dup", "Duplicar"], ["clone", "Clonar"], ["unlink", "Desconectar clon"]],
      [["group", "Agrupar"], ["ungroup", "Desagrupar"]],
      [["fill", "Relleno y borde"], ["text", "Texto"], ["layers", "Capas y objetos"], ["xml", "Editor XML"], ["css", "Selectores y CSS"], ["align", "Alinear"]],
      [["docprops", "Propiedades del documento"], ["prefs", "Preferencias"]]
    ];
    const modes = [["m-bezier", "Bézier"], ["m-spiro", "Spiro"], ["m-bspline", "BSpline"], ["m-zigzag", "Líneas rectas"], ["m-paraxial", "Paraxial"]];
    const tools = [
      [["select", "Selector"], ["node", "Nodos"], ["builder", "Constructor de formas"]],
      [["rect", "Rectángulo"], ["ellipse", "Elipse"], ["star", "Estrella"], ["cube", "Caja 3D"], ["spiral", "Espiral"]],
      [["pen", "Pluma"], ["pencil", "Lápiz"], ["calli", "Caligrafía"], ["texttool", "Texto"]],
      [["gradient", "Degradado"], ["mesh", "Malla"], ["dropper", "Cuentagotas"], ["bucket", "Cubo"]],
      [["tweak", "Retoque"], ["spray", "Aerosol"], ["eraser", "Borrador"], ["connector", "Conector"]]
    ];
    const colors = ("000000 1a1a1a 333333 4d4d4d 666666 808080 999999 b3b3b3 cccccc e6e6e6 ececec f2f2f2 f9f9f9 ffffff " +
      "76140c ec3323 808026 fffd54 387d22 75fb4c 377e7f 73fbfd 00097b 0023f5 75197c ea3ff7 " +
      "2b0300 500a05 76140c 9b2015 c3291b ec3323 eb4338 ed655e ef8782 f3acaa f8d6d5 " +
      "260b0b 4a1717 702425 943432 b8443f c6655f d28a87 e0b0b0 ecd7d7 241c1c 463434 6a5352 8d6e6e a79392 c6b7b6 e2dcdb " +
      "281103 4e2409 773612 9e4a1a c65d22 ef702d ef8741 f09f62 f4b788 f6cfaf fae7d9 " +
      "27190d 4a2d1a 704426 955b33 bc7240 c88f65 d6ac8b e3c8b4 f0e3d8 24201c 443c36 695c50 8d7d6f").split(" ");

    document.getElementById("commands").innerHTML = commands.map(group =>
      group.map(([icon, label]) => `<button aria-label="${label}" class="flex h-[68px] w-[74px] items-center justify-center"><svg class="size-8"><use href="#i-${icon}"/></svg></button>`).join("")
    ).join('<span class="mx-[13px] h-[68px] w-[2px] bg-[#2e2e2e]"></span>');

    document.getElementById("modes").innerHTML = modes.map(([icon, label]) =>
      `<button aria-label="${label}" class="flex h-[68px] w-[72px] items-center justify-center rounded-[10px] ${icon === "m-zigzag" ? "bg-[#1e1e1e]" : ""}"><svg class="size-8"><use href="#i-${icon}"/></svg></button>`
    ).join("");

    // The text tool is a letter next to a green caret
    const textTool = '<span class="flex size-8 items-center justify-between font-[Inter,sans-serif] text-[30px] font-black">A<i class="h-8 w-1 bg-[#43962a]"></i></span>';
    document.getElementById("toolbox").innerHTML = tools.map(group =>
      group.map(([icon, label]) => `<button aria-label="${label}" class="flex h-16 w-full shrink-0 items-center justify-center rounded-[10px] ${icon === "pen" ? "bg-[#1e1e1e]" : ""}">${icon === "texttool" ? textTool : `<svg class="size-8"><use href="#i-${icon}"/></svg>`}</button>`).join("")
    ).join('<span class="h-[2px] w-full shrink-0 bg-[#2e2e2e]"></span>');

    document.getElementById("palette").innerHTML = colors.map((c, i) =>
      `<button aria-label="#${c}" class="flex h-8 w-8 items-center justify-center" style="background:#${c}">${i === 0 ? '<i class="size-[21px] rounded-full border-2 border-[#bbb]"></i>' : ""}</button>`
    ).join("");

    // Rulers: one tick every 5 mm, labelled every 50 mm
    const MM = 3.819;
    function drawRuler(el, vertical, zero, pageMm, sel, cursor) {
      const length = vertical ? el.clientHeight : el.clientWidth;
      const box = (pos, across, len, thick, fill) => vertical
        ? `<rect x="${across}" y="${pos}" width="${thick}" height="${len}" fill="${fill}"/>`
        : `<rect x="${pos}" y="${across}" width="${len}" height="${thick}" fill="${fill}"/>`;
      let out = box(zero, 0, Math.round(pageMm * MM), 38, "#1c1e1d");
      for (let mm = -200; mm <= 400; mm += 5) {
        const pos = Math.floor(zero + mm * MM);
        if (pos < 0 || pos > length) continue;
        const size = mm % 50 === 0 ? 24 : mm % 25 === 0 ? 12 : 6;
        out += box(pos, 38 - size, 2, size, "#eaeaea");
        if (mm % 50 === 0) {
          out += vertical
            ? `<text transform="translate(22 ${pos + 6}) rotate(-90)" text-anchor="end" font-size="20" fill="#eaeaea">${mm}</text>`
            : `<text x="${pos + 5}" y="22" font-size="20" fill="#eaeaea">${mm}</text>`;
        }
      }
      // Selection extent
      const [a, b] = sel;
      const c = 28;
      out += box(a + 7, c - 3, b - a - 14, 5, "#3e8ecc");
      [a, b].forEach(p => {
        out += `<circle cx="${vertical ? c : p}" cy="${vertical ? p : c}" r="6" fill="none" stroke="#3e8ecc" stroke-width="4"/>`;
      });
      out += vertical
        ? `<path d="M30 ${cursor - 9}l10 9-10 9z" fill="#eaeaea"/>`
        : `<path d="M${cursor - 9} 30h18l-9 10z" fill="#eaeaea"/>`;
      out += box(0, 38, length, 2, "#eeeeee");
      out += box(0, 0, length, 2, "#222222");
      el.innerHTML = out;
    }
    function drawRulers() {
      drawRuler(document.getElementById("rulerTop"), false, 662, 210, [1030, 1176], 1036);
      drawRuler(document.getElementById("rulerLeft"), true, 214, 297, [360, 440], 448);
    }
    drawRulers();
    window.addEventListener("resize", drawRulers);
    window.addEventListener("load", drawRulers);
  </script>
</body>
</html>
